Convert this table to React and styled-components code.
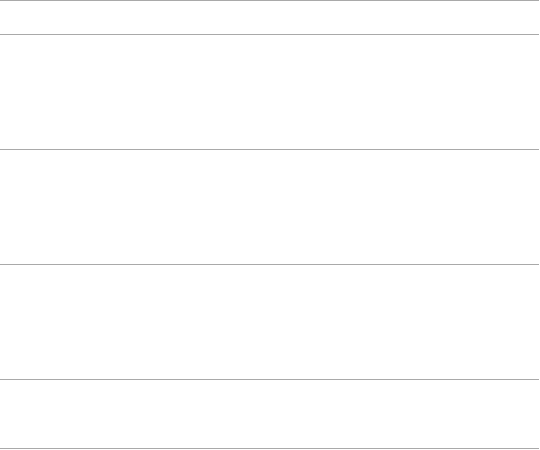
import React from 'react';
import styled, { createGlobalStyle } from 'styled-components';

const GlobalStyle = createGlobalStyle`
  html, body {
    margin: 0;
    padding: 0;
    background: #ffffff;
    font-family: "Liberation Sans", Arial, sans-serif;
  }
`;

const Table = styled.div`
  width: 539px;
  display: flex;
  flex-direction: column;
  border-top: 1px solid #a9a9a9;
`;

const Row = styled.div`
  height: ${(p) => p.$height}px;
  border-bottom: 1px solid #a9a9a9;
`;

const rows = [33, 114, 114, 114, 68];

const App = () => {
  return (
    <>
      <GlobalStyle />
      <Table>
        {rows.map((h, i) => (
          <Row key={i} $height={h} />
        ))}
      </Table>
    </>
  );
};

export default App;
